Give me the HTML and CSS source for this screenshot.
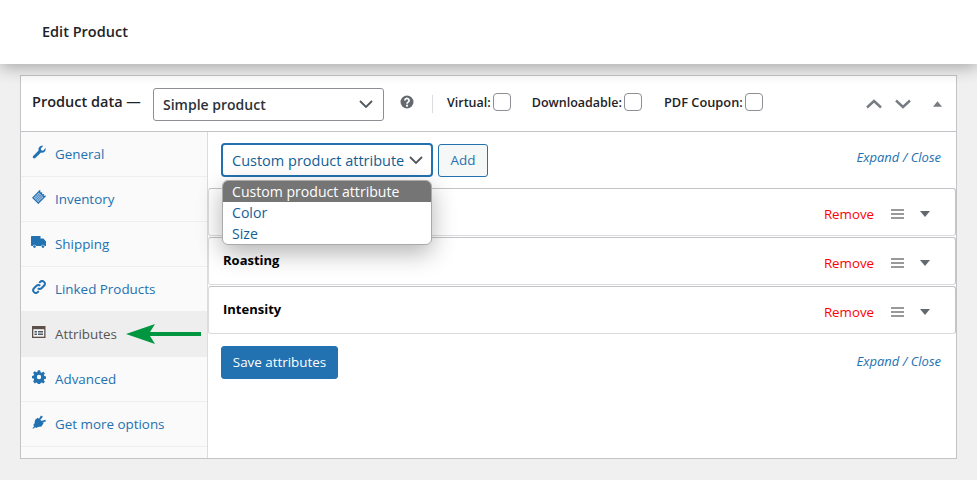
FILE: index.html
```html
<!DOCTYPE html>
<html lang="en">
<head>
<meta charset="utf-8">
<title>Edit Product</title>
<link rel="stylesheet" href="styles.css">
</head>
<body>
<header class="topbar"><h1 class="title">Edit Product</h1></header>
<section class="panel">
  <div class="panel-head">
    <span class="panel-title">Product data —</span>
    <div class="select type-select"><span>Simple product</span><svg class="chev" viewBox="0 0 14 8"><path d="M1 1l6 6 6-6"/></svg></div>
    <svg class="help" viewBox="0 0 14 14"><circle cx="7" cy="7" r="6.5" fill="#646970"/><path d="M4.9 5.4a2.1 2 0 1 1 3.2 1.7c-.8.5-1.1.8-1.1 1.6" fill="none" stroke="#fff" stroke-width="1.7"/><rect x="6" y="9.7" width="2" height="1.9" fill="#fff"/></svg>
    <span class="divider"></span>
    <label class="check first">Virtual:<span class="box"></span></label>
    <label class="check second">Downloadable:<span class="box"></span></label>
    <label class="check third">PDF Coupon:<span class="box"></span></label>
    <div class="head-actions">
      <svg class="move" viewBox="0 0 16 10"><path d="M1 8.500l7-6.500 7 6.500"/></svg>
      <svg class="move" viewBox="0 0 16 10"><path d="M1 1.500l7 6.500 7-6.500"/></svg>
      <svg class="toggle up" viewBox="0 0 10 6"><path d="M5 0l5 6H0z"/></svg>
    </div>
  </div>
  <div class="panel-body">
    <nav class="tabs">
      <a class="tab">
        <svg class="ico" viewBox="0 0 14 14"><path d="M13.500 3.100c.4 1.400 0 2.800-1 3.700-1 .9-2.300 1.100-3.500.7L3.300 13c-.6.6-1.500.6-2.100 0-.6-.6-.6-1.500 0-2.100l5.400-5.300C6.200 4.400 6.500 3 7.400 2 8.300 1.100 9.900.6 11.200 1L8.800 3.400l.4 1.900 1.900.4z"/></svg>
        General</a>
      <a class="tab">
        <svg class="ico" viewBox="0 0 14 14"><g transform="rotate(45 7 7)"><path d="M2.500 1.500h1.500v1h1.500v-1h1v1h1.500v-1h1v1h1v-1h1.500v11h-9z"/><path d="M3.700 4h6.600v7.300H3.700z" fill="#a9c3e4"/><path d="M5.300 4v7.300M7 4v7.300M8.700 4v7.300M3.700 5.800h6.600M3.700 7.600h6.600M3.700 9.400h6.600" stroke="#2271b1" stroke-width=".5" fill="none"/></g></svg>
        Inventory</a>
      <a class="tab">
        <svg class="ico wide" viewBox="0 0 15 12"><path d="M0 1C0 .4.400 0 1 0h8.500v2.500h3L15 5.500V10h-1.300a1.800 1.800 0 0 0-3.400 0H5.200a1.800 1.800 0 0 0-3.400 0H1c-.6 0-1-.4-1-1z"/><circle cx="3.500" cy="10.600" r="1.300"/><circle cx="12" cy="10.600" r="1.300"/></svg>
        Shipping</a>
      <a class="tab">
        <svg class="ico" viewBox="0 0 14 14"><path d="M5.800 8.200a2.600 2.600 0 0 0 3.700 0l2.700-2.700a2.700 2.700 0 0 0-3.800-3.800L7.200 2.900M8.200 5.800a2.600 2.600 0 0 0-3.700 0L1.800 8.500a2.700 2.700 0 0 0 3.800 3.800l1.200-1.200" fill="none" stroke="currentColor" stroke-width="2"/></svg>
        Linked Products</a>
      <a class="tab active">
        <svg class="ico wide attr" viewBox="0 0 14 12"><path d="M0 0h13.500v12H0z" fill="#5c5048"/><path d="M1.300 3.200h10.900v7.500H1.300z" fill="#f4f4f4"/><path d="M2.500 5h2.500v1.500H2.500zM2.500 7.500h2.500V9H2.500zM6 5h5v1.500H6zM6 7.500h5V9H6z" fill="#4d5a66"/></svg>
        Attributes</a>
      <a class="tab">
        <svg class="ico" viewBox="0 0 14 14"><path d="M5.800 0h2.400l.4 2 1.200.5 1.700-1.100 1.700 1.700-1.100 1.700.5 1.200 2 .4v2.400l-2 .4-.5 1.200 1.100 1.700-1.700 1.700-1.700-1.100-1.200.5-.4 2H5.800l-.4-2-1.200-.5-1.700 1.100L.8 11.600l1.100-1.700-.5-1.200-2-.4V5.900l2-.4.5-1.200L.8 2.600 2.500.9l1.700 1.100 1.200-.5zM7 4.700a2.300 2.300 0 1 0 0 4.600 2.300 2.300 0 0 0 0-4.600z" fill-rule="evenodd" transform="translate(.35 .35) scale(.95)"/></svg>
        Advanced</a>
      <a class="tab">
        <svg class="ico" viewBox="0 0 14 14"><path d="M5.600 2.800l6.200 5-2.300 3.700-3.500.5-1.700 1.100-1-.9-2.300 1.600-.5-.5L2.200 11l-1-1 1.300-1.600.5-3.300zM9 .6l1.900 1.100L8.200 5 6.800 4zM13.400 4.700l.5 1.900-3.900.7-1-1.400z"/></svg>
        Get more options</a>
    </nav>
    <div class="content">
      <div class="toolbar top-tools">
        <div class="select attr-select"><span>Custom product attribute</span><svg class="chev" viewBox="0 0 14 8"><path d="M1 1l6 6 6-6"/></svg></div>
        <button class="btn-add" type="button">Add</button>
        <a class="expand expand-top">Expand / Close</a>
      </div>
      <div class="rows">
        <div class="row"><strong class="row-name"></strong><a class="remove">Remove</a><svg class="drag" viewBox="0 0 13 10"><path d="M0 0h13v2H0zM0 4h13v2H0zM0 8h13v2H0z"/></svg><svg class="toggle" viewBox="0 0 10 6"><path d="M0 0h10L5 6z"/></svg></div>
        <div class="row"><strong class="row-name">Roasting</strong><a class="remove">Remove</a><svg class="drag" viewBox="0 0 13 10"><path d="M0 0h13v2H0zM0 4h13v2H0zM0 8h13v2H0z"/></svg><svg class="toggle" viewBox="0 0 10 6"><path d="M0 0h10L5 6z"/></svg></div>
        <div class="row"><strong class="row-name">Intensity</strong><a class="remove">Remove</a><svg class="drag" viewBox="0 0 13 10"><path d="M0 0h13v2H0zM0 4h13v2H0zM0 8h13v2H0z"/></svg><svg class="toggle" viewBox="0 0 10 6"><path d="M0 0h10L5 6z"/></svg></div>
      </div>
      <div class="toolbar bottom-tools">
        <button class="btn-save" type="button">Save attributes</button>
        <a class="expand expand-bottom">Expand / Close</a>
      </div>
      <ul class="menu">
        <li class="menu-item selected">Custom product attribute</li>
        <li class="menu-item">Color</li>
        <li class="menu-item">Size</li>
      </ul>
    </div>
    <svg class="arrow" viewBox="0 0 75 20"><path d="M0 10L29 0l-5 8h51v4H24l5 8z"/></svg>
  </div>
</section>
</body>
</html>
```

FILE: styles.css
```css
* { box-sizing: border-box; }
html, body { margin: 0; padding: 0; }
body {
  width: 977px;
  height: 480px;
  overflow: hidden;
  background: #f0f0f1;
  font-family: "Open Sans", "Noto Sans", sans-serif;
  font-size: 13px;
  color: #1d2327;
}
.topbar {
  height: 64px;
  background: #fff;
  box-shadow: 0 3px 16px rgba(0, 0, 0, .32);
  padding: 0 42px 2px;
  display: flex;
  align-items: center;
  position: relative;
}
.title { margin: 0; font-size: 14.5px; font-weight: 600; color: #1d2327; }
.panel {
  width: 937px;
  height: 384px;
  margin: 11px 0 0 20px;
  background: #fff;
  border: 1px solid #c3c4c7;
  display: flex;
  flex-direction: column;
}
.panel-head {
  height: 56px;
  flex: none;
  border-bottom: 1px solid #c3c4c7;
  display: flex;
  align-items: center;
  padding: 0 11px;
}
.panel-title { font-size: 14.5px; font-weight: 600; width: 121px; flex: none; margin-top: -4px; white-space: nowrap; }
.select {
  display: flex;
  align-items: center;
  justify-content: space-between;
  background: #fff;
  border-radius: 3px;
}
.select span { white-space: nowrap; }
.type-select {
  width: 231px;
  height: 33px;
  border: 1px solid #8c8f94;
  padding: 0 10px 0 9px;
  font-size: 14px;
  font-weight: 600;
  color: #2c3338;
  margin-top: 1px;
}
.chev { width: 14px; height: 8px; fill: none; stroke: #50575e; stroke-width: 1.800; }
.help { width: 14px; height: 14px; margin: -3px 0 0 16px; flex: none; }
.divider { width: 1px; height: 18px; background: #dcdcde; margin: 0 14px 0 18px; flex: none; }
.check { display: flex; align-items: center; font-size: 12.5px; font-weight: 600; color: #1d2327; gap: 2px; white-space: nowrap; margin-top: -3px; }
.second { margin-left: 21px; }
.third { margin-left: 22px; font-size: 12.8px; }
.box { width: 18px; height: 18px; border: 1px solid #8c8f94; border-radius: 4px; background: #fff; flex: none; }
.head-actions { margin-left: auto; display: flex; align-items: center; padding-right: 3px; }
.move { width: 16px; height: 10px; fill: none; stroke: #787c82; stroke-width: 2.400; margin-right: 13px; }
.move + .move { margin-right: 22px; }
.toggle { width: 9px; height: 6px; fill: #646970; flex: none; }
.toggle.up { fill: #787c82; }
.panel-body { flex: 1; display: flex; position: relative; min-height: 0; }
.tabs {
  width: 187px;
  flex: none;
  background: #fafafa;
  border-right: 1px solid #dcdcde;
  display: flex;
  flex-direction: column;
}
.tab {
  height: 45px;
  flex: none;
  display: flex;
  align-items: center;
  font-size: 13.4px;
  color: #2271b1;
  border-bottom: 1px solid #eee;
  padding-left: 11px;
  gap: 9px;
  white-space: nowrap;
}
.tab.active { background: #eee; color: #555; }
.ico { width: 14px; height: 14px; flex: none; fill: currentColor; margin: -4px 0 0 0; }
.ico.wide { width: 15px; height: 12px; margin-left: -1px; margin-right: 0; }
.ico.attr { width: 14px; margin-left: 0; margin-right: 0; }
.content { flex: 1; position: relative; min-width: 0; }
.toolbar { display: flex; align-items: center; }
.top-tools { height: 56px; padding: 0 15px 0 13px; }
.attr-select {
  width: 212px;
  height: 34px;
  border: 2px solid #2271b1;
  border-radius: 4px;
  padding: 0 8px 0 9px;
  font-size: 14.5px;
  color: #135e96;
}
.btn-add {
  width: 50px;
  height: 33px;
  margin-left: 5px;
  background: #f6f7f7;
  border: 1px solid #2271b1;
  border-radius: 3px;
  color: #2271b1;
  font: inherit;
  font-size: 13.4px;
}
.expand { margin-left: auto; font-size: 13px; font-style: italic; color: #2271b1; }
.expand-top { margin-top: -6px; }
.expand-bottom { margin-top: -4px; }
.rows { display: flex; flex-direction: column; gap: 1px; }
.row {
  height: 48px;
  background: #fff;
  border: 1px solid #dcdcde;
  border-top-color: #c3c4c7;
  border-right-color: #c3c4c7;
  border-radius: 3px;
  display: flex;
  align-items: center;
  padding: 0 25px 0 14px;
}
.row-name { font-size: 13px; font-weight: 700; color: #000; margin-top: -2px; }
.remove { margin-left: auto; margin-top: 4px; font-size: 13.3px; color: #f00; }
.drag { width: 13px; height: 10px; fill: #999; margin: 4px 0 0 17px; flex: none; }
.row .toggle { width: 10px; margin: 4px 0 0 16px; }
.bottom-tools { padding: 12px 15px 0 13px; }
.btn-save {
  height: 33px;
  width: 117px;
  padding: 0 0 2px;
  background: #2271b1;
  border: 1px solid #2271b1;
  border-radius: 3px;
  color: #fff;
  font: inherit;
  font-size: 13.4px;
}
.menu {
  position: absolute;
  left: 14px;
  top: 48px;
  width: 210px;
  margin: 0;
  padding: 0;
  list-style: none;
  background: #fff;
  border: 1px solid #aaa;
  border-radius: 6px;
  overflow: hidden;
  box-shadow: 0 8px 24px rgba(0, 0, 0, .3);
  font-size: 14.1px;
  color: #135e96;
}
.menu-item { height: 21px; line-height: 21px; padding-left: 9px; white-space: nowrap; }
.menu-item.selected { background: #757575; color: #fff; }
.arrow { position: absolute; left: 105px; top: 192px; width: 75px; height: 20px; fill: #00953f; }
```
